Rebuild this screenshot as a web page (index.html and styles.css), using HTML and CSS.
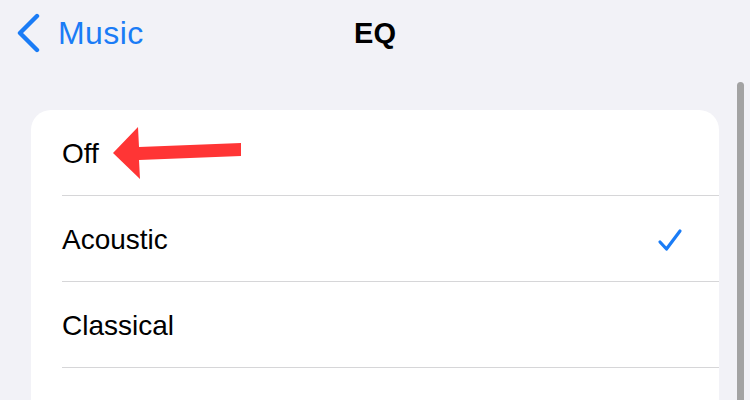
FILE: index.html
```html
<!DOCTYPE html>
<html lang="en">
<head>
    <meta charset="UTF-8">
    <meta name="viewport" content="width=device-width, initial-scale=1.0">
    <title>EQ</title>
    <link rel="stylesheet" href="styles.css">
</head>
<body>

<header class="navbar">
    <a class="back" href="#music">
        <svg class="chevron" viewBox="0 0 26 40" width="26" height="40">
            <path d="M22 3 L5 20 L22 37" fill="none" stroke="#1a7cf6" stroke-width="4.4" stroke-linecap="round" stroke-linejoin="round"/>
        </svg>
        <span>Music</span>
    </a>
    <h1 class="title">EQ</h1>
    <span></span>
</header>

<main class="content">
    <ul class="list">
        <li class="row"><div class="row-inner">Off</div></li>
        <li class="row"><div class="row-inner">Acoustic
            <svg class="check" viewBox="0 0 26 24" width="26" height="24">
                <path d="M3 14 L9.5 21 L23 3" fill="none" stroke="#1a7cf6" stroke-width="3.2" stroke-linecap="round" stroke-linejoin="round"/>
            </svg>
        </div></li>
        <li class="row"><div class="row-inner">Classical</div></li>
        <li class="row"><div class="row-inner"></div></li>
    </ul>
</main>

<!-- red annotation arrow pointing at "Off" -->
<svg class="annotation" viewBox="0 0 135 62" width="135" height="62">
    <polygon points="3,31 28,5 29,25 131,21 131,34 29,38 30,57" fill="#ff3535"/>
</svg>

<div class="scroll-indicator"></div>

</body>
</html>
```

FILE: styles.css
```css
body {
    font-family: "Liberation Sans", Arial, sans-serif;
    background-color: #f2f2f7;
    color: #000;
    margin: 0;
    padding: 0;
    height: 400px;
    overflow: hidden;
    position: relative;
}
.navbar {
    display: grid;
    grid-template-columns: 1fr auto 1fr;
    align-items: center;
    height: 66px;
}
.back {
    display: flex;
    align-items: center;
    gap: 17px;
    padding-left: 15px;
    color: #1a7cf6;
    text-decoration: none;
    font-size: 32px;
    letter-spacing: 0.4px;
}
.back span {
    margin-top: 1px;
}
.chevron {
    display: block;
}
.title {
    margin: 0;
    font-size: 29px;
    font-weight: bold;
}
.content {
    padding: 44px 31px 0;
}
.list {
    list-style: none;
    margin: 0;
    padding: 0;
    background-color: #fff;
    border-radius: 20px;
}
.row {
    padding-left: 31px;
    font-size: 28px;
}
.row-inner {
    display: flex;
    align-items: center;
    justify-content: space-between;
    height: 85px;
    padding-top: 3px;
    padding-right: 36px;
    box-sizing: content-box;
    border-bottom: 1px solid #d6d6d8;
}
.row-inner {
    height: 82px;
}
.check {
    display: block;
}
.annotation {
    position: absolute;
    left: 110px;
    top: 122px;
}
.scroll-indicator {
    position: absolute;
    left: 737px;
    top: 82px;
    width: 7px;
    height: 340px;
    border-radius: 4px;
    background-color: #a3a3a3;
}
```
